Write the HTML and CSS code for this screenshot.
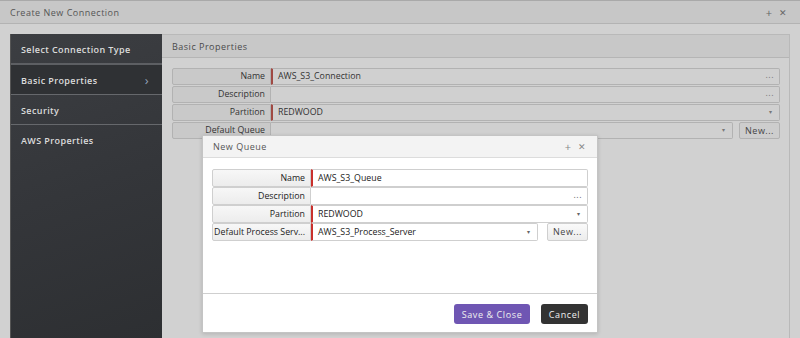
FILE: index.html
```html
<!DOCTYPE html>
<html lang="en">
<head>
  <meta charset="UTF-8">
  <title>Create New Connection</title>
  <link rel="stylesheet" href="styles.css">
</head>
<body>

<div class="titlebar">
  <span class="title">Create New Connection</span>
  <span class="tools"><span>+</span><span class="x">&#x2715;</span></span>
</div>

<div class="main">
  <div class="sidebar">
    <div class="item first">Select Connection Type</div>
    <div class="item active">Basic Properties <span class="chev">&#x203A;</span></div>
    <div class="item">Security</div>
    <div class="item">AWS Properties</div>
  </div>

  <div class="panel">
    <div class="panel-head">Basic Properties</div>
    <div class="form">
      <div class="row">
        <div class="label">Name</div>
        <div class="field req">AWS_S3_Connection <span class="dots">...</span></div>
      </div>
      <div class="row">
        <div class="label">Description</div>
        <div class="field"><span class="dots">...</span></div>
      </div>
      <div class="row">
        <div class="label">Partition</div>
        <div class="field req">REDWOOD <span class="arrow">&#x25BE;</span></div>
      </div>
      <div class="row">
        <div class="label">Default Queue</div>
        <div class="field short"><span class="arrow">&#x25BE;</span></div>
        <div class="btn-new">New...</div>
      </div>
    </div>
  </div>
</div>

<div class="modal">
  <div class="modal-head">
    <span class="title">New Queue</span>
    <span class="tools"><span>+</span><span class="x">&#x2715;</span></span>
  </div>
  <div class="modal-body">
    <div class="row">
      <div class="label">Name</div>
      <div class="field req">AWS_S3_Queue</div>
    </div>
    <div class="row">
      <div class="label">Description</div>
      <div class="field"><span class="dots">...</span></div>
    </div>
    <div class="row">
      <div class="label">Partition</div>
      <div class="field req">REDWOOD <span class="arrow">&#x25BE;</span></div>
    </div>
    <div class="row">
      <div class="label">Default Process Serv...</div>
      <div class="field req short">AWS_S3_Process_Server <span class="arrow">&#x25BE;</span></div>
      <div class="btn-new">New...</div>
    </div>
  </div>
  <div class="modal-foot">
    <button class="btn save">Save &amp; Close</button>
    <button class="btn cancel">Cancel</button>
  </div>
</div>

</body>
</html>
```

FILE: styles.css
```css
* { box-sizing: border-box; }

body {
  margin: 0;
  font-family: 'Open Sans', 'Noto Sans', sans-serif;
  font-size: 9px;
  background: #d1d1d1;
  color: #3a3a3a;
  height: 338px;
  overflow: hidden;
}

.titlebar {
  height: 24px;
  background: #c7c7c7;
  border-top: 1px solid #a9a9a9;
  border-bottom: 1px solid #b3b3b3;
  display: flex;
  align-items: center;
  justify-content: space-between;
  padding: 0 13px 0 10px;
}

.title {
  letter-spacing: 0.5px;
  color: #555;
}

.tools {
  display: flex;
  align-items: center;
  gap: 7px;
  color: #666;
  font-size: 11px;
}

.tools .x { font-size: 9px; }

.main {
  display: flex;
  padding: 10px 10px 0 10px;
  height: 314px;
}

.sidebar {
  width: 152px;
  background: linear-gradient(160deg, #3c3e42 0%, #34363a 50%, #2d2f32 100%);
  border-left: 1px solid #555;
}

.sidebar .item {
  height: 30px;
  padding: 1px 10px 0 10px;
  display: flex;
  align-items: center;
  justify-content: space-between;
  color: #dcdcdc;
  font-weight: 600;
  letter-spacing: 0.4px;
  border-bottom: 1px solid #66686c;
}

.sidebar .item.first { height: 31px; border-bottom: 2px solid #5d5f63; }
.sidebar .item:last-child { border-bottom: none; }

.sidebar .item.active {
  background: #2f3134;
}

.chev {
  font-size: 13px;
  color: #8fa0b8;
  font-weight: 400;
  margin-right: 3px;
}

.panel {
  flex: 1;
  border: 1px solid #b9b9b9;
  border-left: none;
  border-bottom: none;
}

.panel-head {
  height: 23px;
  background: #c8c8c8;
  border-bottom: 1px solid #b5b5b5;
  padding-left: 10px;
  display: flex;
  align-items: center;
  letter-spacing: 0.5px;
  color: #4a4a4a;
}

.form {
  padding: 10px 9px 0 10px;
}

.row {
  display: flex;
  height: 17px;
  margin-bottom: 1px;
}

.label {
  width: 99px;
  flex: none;
  text-align: right;
  padding-right: 5px;
  line-height: 15px;
  font-size: 8.8px;
  color: #333;
  background: #c9c9c9;
  border: 1px solid #b2b2b2;
  border-radius: 2px 0 0 2px;
  white-space: nowrap;
  overflow: hidden;
}

.field {
  flex: 1;
  position: relative;
  border: 1px solid #b2b2b2;
  border-left: none;
  background: #d0d0d0;
  padding-left: 6px;
  line-height: 15px;
  font-size: 8.8px;
  color: #333;
  border-radius: 0 2px 2px 0;
}

.field.req { border-left: 2px solid #a04a44; padding-left: 5px; }

.field.short { flex: none; width: 462px; }

.dots {
  position: absolute;
  right: 5px;
  top: -1px;
  color: #777;
  letter-spacing: 0.5px;
}

.arrow {
  position: absolute;
  right: 7px;
  top: 0;
  font-size: 6px;
  color: #777;
}

.btn-new {
  margin-left: 6px;
  flex: 1;
  border: 1px solid #b2b2b2;
  border-radius: 2px;
  background: #cdcdcd;
  text-align: center;
  line-height: 15px;
  color: #444;
  letter-spacing: 0.5px;
}

.modal {
  position: absolute;
  left: 202px;
  top: 135px;
  width: 396px;
  height: 198px;
  background: #fff;
  border: 1px solid #c4c4c4;
  box-shadow: 0 1px 4px rgba(0, 0, 0, 0.15);
}

.modal-head {
  height: 22px;
  background: #f3f3f3;
  border-bottom: 1px solid #dcdcdc;
  display: flex;
  align-items: center;
  justify-content: space-between;
  padding: 0 11px 0 10px;
}

.modal-head .tools { color: #888; }

.modal-body {
  height: 136px;
  padding: 11px 9px 0 9px;
  border-bottom: 1px solid #cfcfcf;
}

.modal-body .row { height: 18px; margin-bottom: 0; }

.modal-body .label {
  background: linear-gradient(#f7f7f7, #ececec);
  border-color: #cfcfcf;
  color: #222;
  line-height: 16px;
}

.modal-body .field {
  background: #fff;
  border-color: #cfcfcf;
  line-height: 16px;
  color: #222;
}

.modal-body .field.req { border-left-color: #c9302c; }

.modal-body .field.short { width: 227px; }

.modal-body .btn-new {
  margin-left: 9px;
  background: linear-gradient(#fafafa, #ececec);
  border-color: #cfcfcf;
  line-height: 16px;
  color: #444;
}

.modal-body .dots, .modal-body .arrow { color: #666; }

.modal-foot {
  display: flex;
  justify-content: flex-end;
  gap: 11px;
  padding: 10px 9px 0 0;
}

.btn {
  border: none;
  border-radius: 3px;
  height: 20px;
  font-family: 'Open Sans', 'Noto Sans', sans-serif;
  font-size: 9px;
  letter-spacing: 0.6px;
  color: #f0f0f0;
  padding: 0;
}

.btn.save { width: 76px; background: #6f56b3; }
.btn.cancel { width: 47px; background: #333; }
```
